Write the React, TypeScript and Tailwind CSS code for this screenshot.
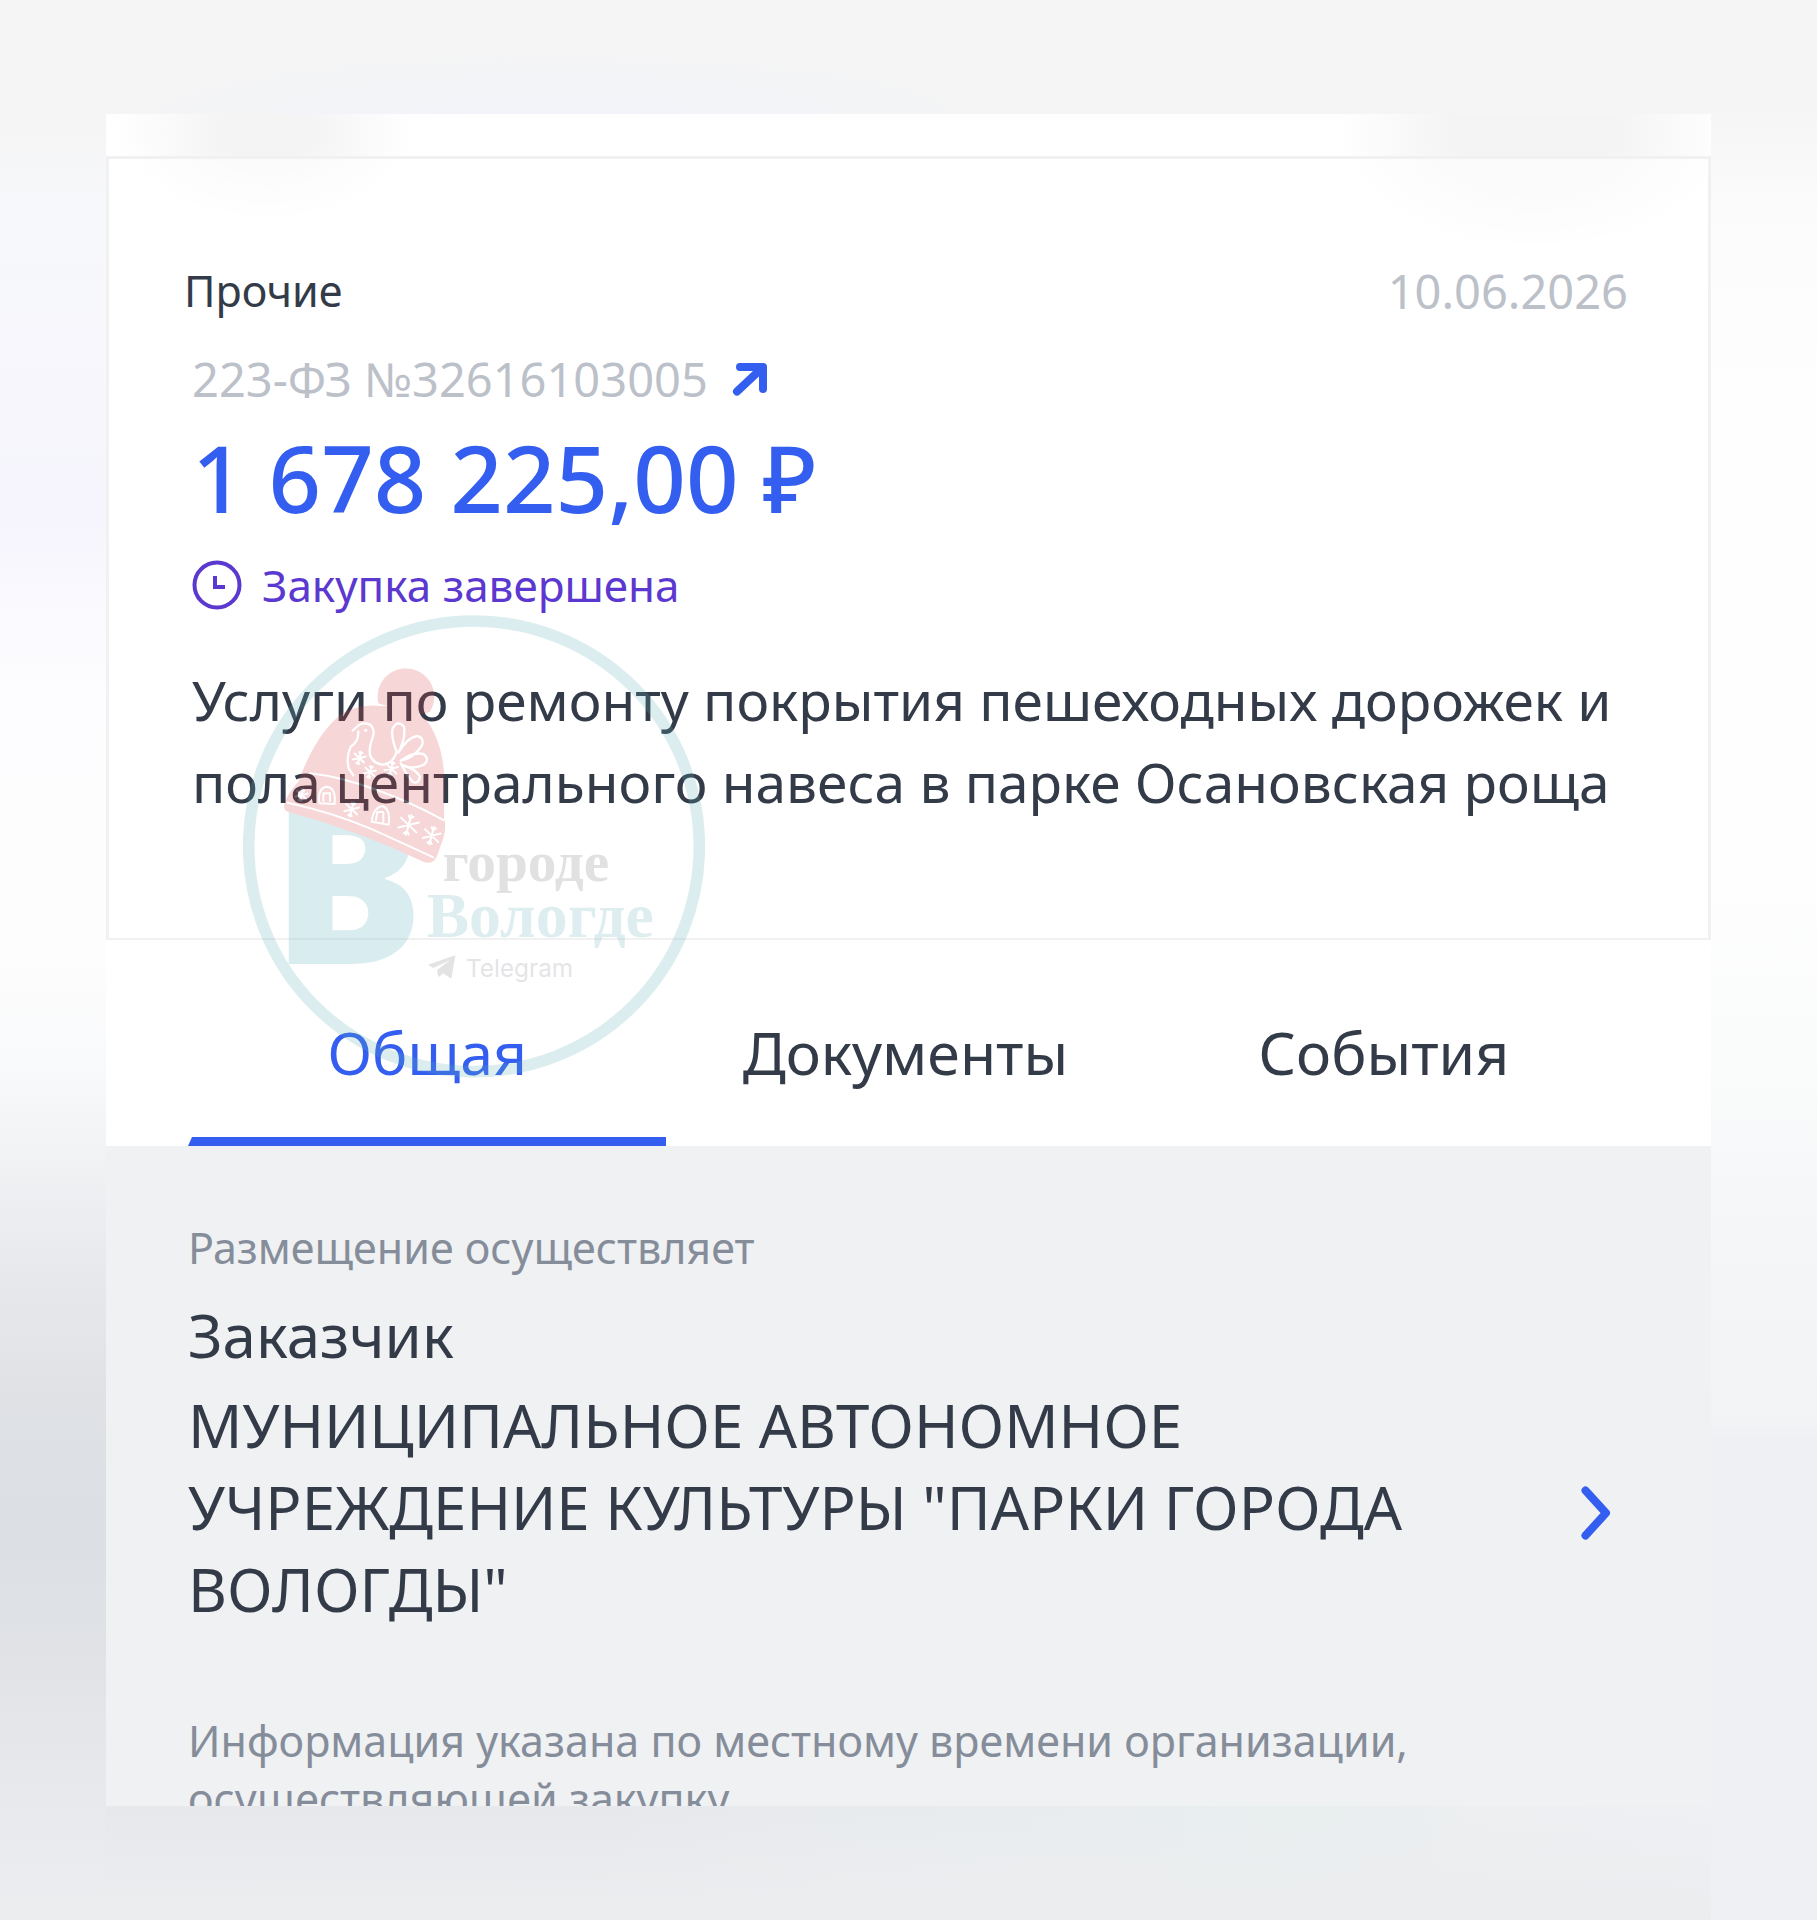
import { useState } from "react"

const tabs = ["Общая", "Документы", "События"]

function ArrowIcon() {
  return (
    <svg viewBox="0 0 36 34" className="w-9 h-[34px]" fill="none" stroke="#345eef" strokeWidth="8" strokeLinecap="round" strokeLinejoin="round">
      <path d="M8 5H31V27" />
      <path d="M29 7L5 29.500" />
    </svg>
  )
}

function ClockIcon() {
  return (
    <svg viewBox="0 0 50 50" className="size-[50px]" fill="none" stroke="#5b38cf" strokeWidth="4">
      <circle cx="25" cy="25" r="22.500" />
      <path d="M23 16V27H33" />
    </svg>
  )
}

function ChevronIcon() {
  return (
    <svg viewBox="0 0 30 54" className="w-[30px] h-[54px] mt-3 shrink-0" fill="none" stroke="#345eef" strokeWidth="8" strokeLinecap="round" strokeLinejoin="round">
      <path d="M4.500 4.500L25 27L4.500 49.500" />
    </svg>
  )
}

function Snowflake({ x, y, r }: { x: number; y: number; r: number }) {
  return (
    <g transform={`translate(${x} ${y}) rotate(15) scale(${r})`} strokeWidth={6 / r}>
      <path d="M0 -1V1M-0.900 -0.500L0.900 0.500M-0.900 0.500L0.900 -0.500M-0.250 -0.900L0 -0.600L0.250 -0.900M-0.250 0.900L0 0.600L0.250 0.900" />
    </g>
  )
}

// Channel logo laid over the card
function Watermark() {
  return (
    <svg
      viewBox="39 39 1386 1401"
      className="absolute left-[137px] top-[499px] w-[462px] h-[467px] opacity-[0.22] pointer-events-none"
      aria-label="В городе Вологде"
    >
      <circle cx="732" cy="739" r="676" fill="none" stroke="#60b2b9" strokeWidth="35" />
      <text x="124" y="1092" fontSize="680" fontWeight="800" fill="#58aebb" fontFamily="Open Sans, sans-serif">В</text>
      <g fill="#d8474a">
        <path d="M445 310A85 85 0 1 1 600 335Q560 350 520 335T445 310Z" />
        <path d="M162 618Q168 585 205 545Q262 390 345 335Q400 312 450 318Q560 315 600 375Q645 450 643 560L642 655Q650 680 640 715L622 765Q612 795 582 786Q380 690 175 636Q162 632 162 618Z" />
      </g>
      <g fill="none" stroke="#fff" strokeWidth="6" strokeLinecap="round" strokeLinejoin="round">
        <path d="M240 520Q330 530 440 570Q540 605 640 660" />
        <path d="M172 608Q300 635 420 685Q520 730 610 772" />
        <path strokeWidth="7" d="M368 392L388 374Q405 366 420 374Q436 388 428 412Q416 445 420 465Q430 492 460 494Q490 490 500 455Q482 410 488 385Q503 358 522 380Q528 415 505 458Q530 415 560 408Q585 412 575 438Q550 475 512 482Q550 455 580 462Q602 478 580 495Q545 510 515 495Q555 505 570 530Q565 555 548 545Q530 525 512 490M385 394Q386 425 362 440Q348 470 356 505L370 526" />
        <circle cx="407" cy="391" r="2" />
        <path d="M268 610Q262 565 290 560Q318 562 314 612ZM280 603V580H300V603" />
        <path d="M425 665Q430 622 458 618Q482 628 476 674ZM438 660L442 636H460V665" />
        <Snowflake x={388} y={474} r={19} />
        <Snowflake x={420} y={516} r={18} />
        <Snowflake x={484} y={506} r={20} />
        <Snowflake x={215} y={585} r={18} />
        <Snowflake x={365} y={628} r={22} />
        <Snowflake x={536} y={675} r={31} />
        <Snowflake x={605} y={707} r={27} />
      </g>
      <g fontFamily="Liberation Serif, serif" fontWeight="700">
        <text x="638" y="842" fontSize="172" fill="#7a7a80">городе</text>
        <text x="590" y="1012" fontSize="191" fill="#6cb6bd">Вологде</text>
      </g>
      <path fill="#85858a" d="M594 1094L676 1066L664 1136L640 1120L625 1132L621 1110L660 1080L610 1104Z" />
      <text x="708" y="1130" fontSize="73" fill="#8a8a90" fontFamily="Inter, sans-serif">Telegram</text>
    </svg>
  )
}

export default function App() {
  const [active, setActive] = useState(tabs[0])

  return (
    <div className="grid grid-cols-[106px_1fr_106px] font-['Noto_Sans',sans-serif] text-[#343b48]">
      <div className="bg-[linear-gradient(180deg,#f5f5f5_6%,#f7f8fb_11%,#f6f5fd_27%,#fdfdff_36%,#fdfdfd_50%,#f8f9fb_56%,#f0f1f3_61%,#e7e9ed_66%,#dfe1e5_73%,#dce0e4_80%,#e0e2e6_86%,#e7e8ec_92%,#ecedef_100%)]" />

      <div className="min-w-0">
        <div className="h-[114px] bg-[radial-gradient(ellipse_30%_60%_at_28%_100%,#f2f4fa,transparent)] bg-[#f5f5f5]" />

        <main className="relative overflow-hidden bg-white">
          <div className="bg-[radial-gradient(ellipse_150px_90px_at_10%_20px,#f4f4f4_30%,transparent),radial-gradient(ellipse_200px_120px_at_89%_20px,#f4f4f4_40%,transparent)]">
            <div className="h-[42px]" />
            <section className="border-t-3 border-x-3 border-b-2 border-[#f1f1f2] bg-white/60 pt-[102px] pb-[115px] pl-[83px] pr-[80px]">
              <div className="flex justify-between -ml-2 leading-[60px]">
                <span className="text-[43px]">Прочие</span>
                <span className="text-[47px] text-[#bcc1c9]">10.06.2026</span>
              </div>
              <a href="#notice" className="mt-7 flex items-center gap-6 text-[47px] leading-[60px] text-[#bcc1c9]">
                223-ФЗ №32616103005
                <ArrowIcon />
              </a>
              <p className="mt-6 text-[92px] leading-[90px] font-medium text-[#345eef]">1 678 225,00 ₽</p>
              <div className="mt-8 flex items-center gap-5 text-[44px] leading-[60px] text-[#5b38cf]">
                <ClockIcon />
                Закупка завершена
              </div>
              <h1 className="mt-11 text-[55px] leading-[82px]">
                Услуги по ремонту покрытия пешеходных дорожек и пола центрального навеса в парке Осановская роща
              </h1>
            </section>
          </div>

          <nav className="grid grid-cols-3 pl-[82px] pr-[88px]">
            {tabs.map((tab) => (
              <button key={tab} type="button" onClick={() => setActive(tab)} className="pt-[71px] text-[59px] leading-[82px]">
                <span className={tab === active ? "text-[#345eef]" : ""}>{tab}</span>
                <span className={tab === active ? "block mt-11 h-[9px] bg-[#345eef] [clip-path:polygon(4px_0,100%_0,100%_100%,0_100%)]" : "block mt-11 h-[9px]"} />
              </button>
            ))}
          </nav>

          <section className="bg-[#eff1f3] pt-[72px] pl-[82px] pr-[100px]">
            <p className="text-[43px] leading-[60px] text-[#868d9a]">Размещение осуществляет</p>
            <h2 className="mt-4 text-[60px] leading-[82px]">Заказчик</h2>
            <button type="button" className="mt-2 flex w-full items-center justify-between text-left text-[60px] leading-[82px]">
              <span className="max-w-[1260px]">МУНИЦИПАЛЬНОЕ АВТОНОМНОЕ УЧРЕЖДЕНИЕ КУЛЬТУРЫ "ПАРКИ ГОРОДА ВОЛОГДЫ"</span>
              <ChevronIcon />
            </button>
            <p className="mt-[82px] h-[94px] max-w-[1300px] overflow-hidden text-[43px] leading-[58px] text-[#868d9a]">
              Информация указана по местному времени организации, осуществляющей закупку
            </p>
          </section>

          <Watermark />
        </main>

        <div className="bg-[linear-gradient(90deg,#e7e8eb,#e7e8eb_30%,#e8ebee_50%,#e9eeef_75%,#edeff1_85%,#eef0f3)]">
          <div className="h-[114px] bg-[linear-gradient(180deg,transparent,#ecedef)]" />
        </div>
      </div>

      <div className="bg-[linear-gradient(180deg,#f5f5f5_5%,#fcfcfc_12%,#fefefe_21%,#fefefe_45%,#fafcfb_55%,#f6f7f9_62%,#f2f3f5_74%,#eef0f3_75%)]" />
    </div>
  )
}
